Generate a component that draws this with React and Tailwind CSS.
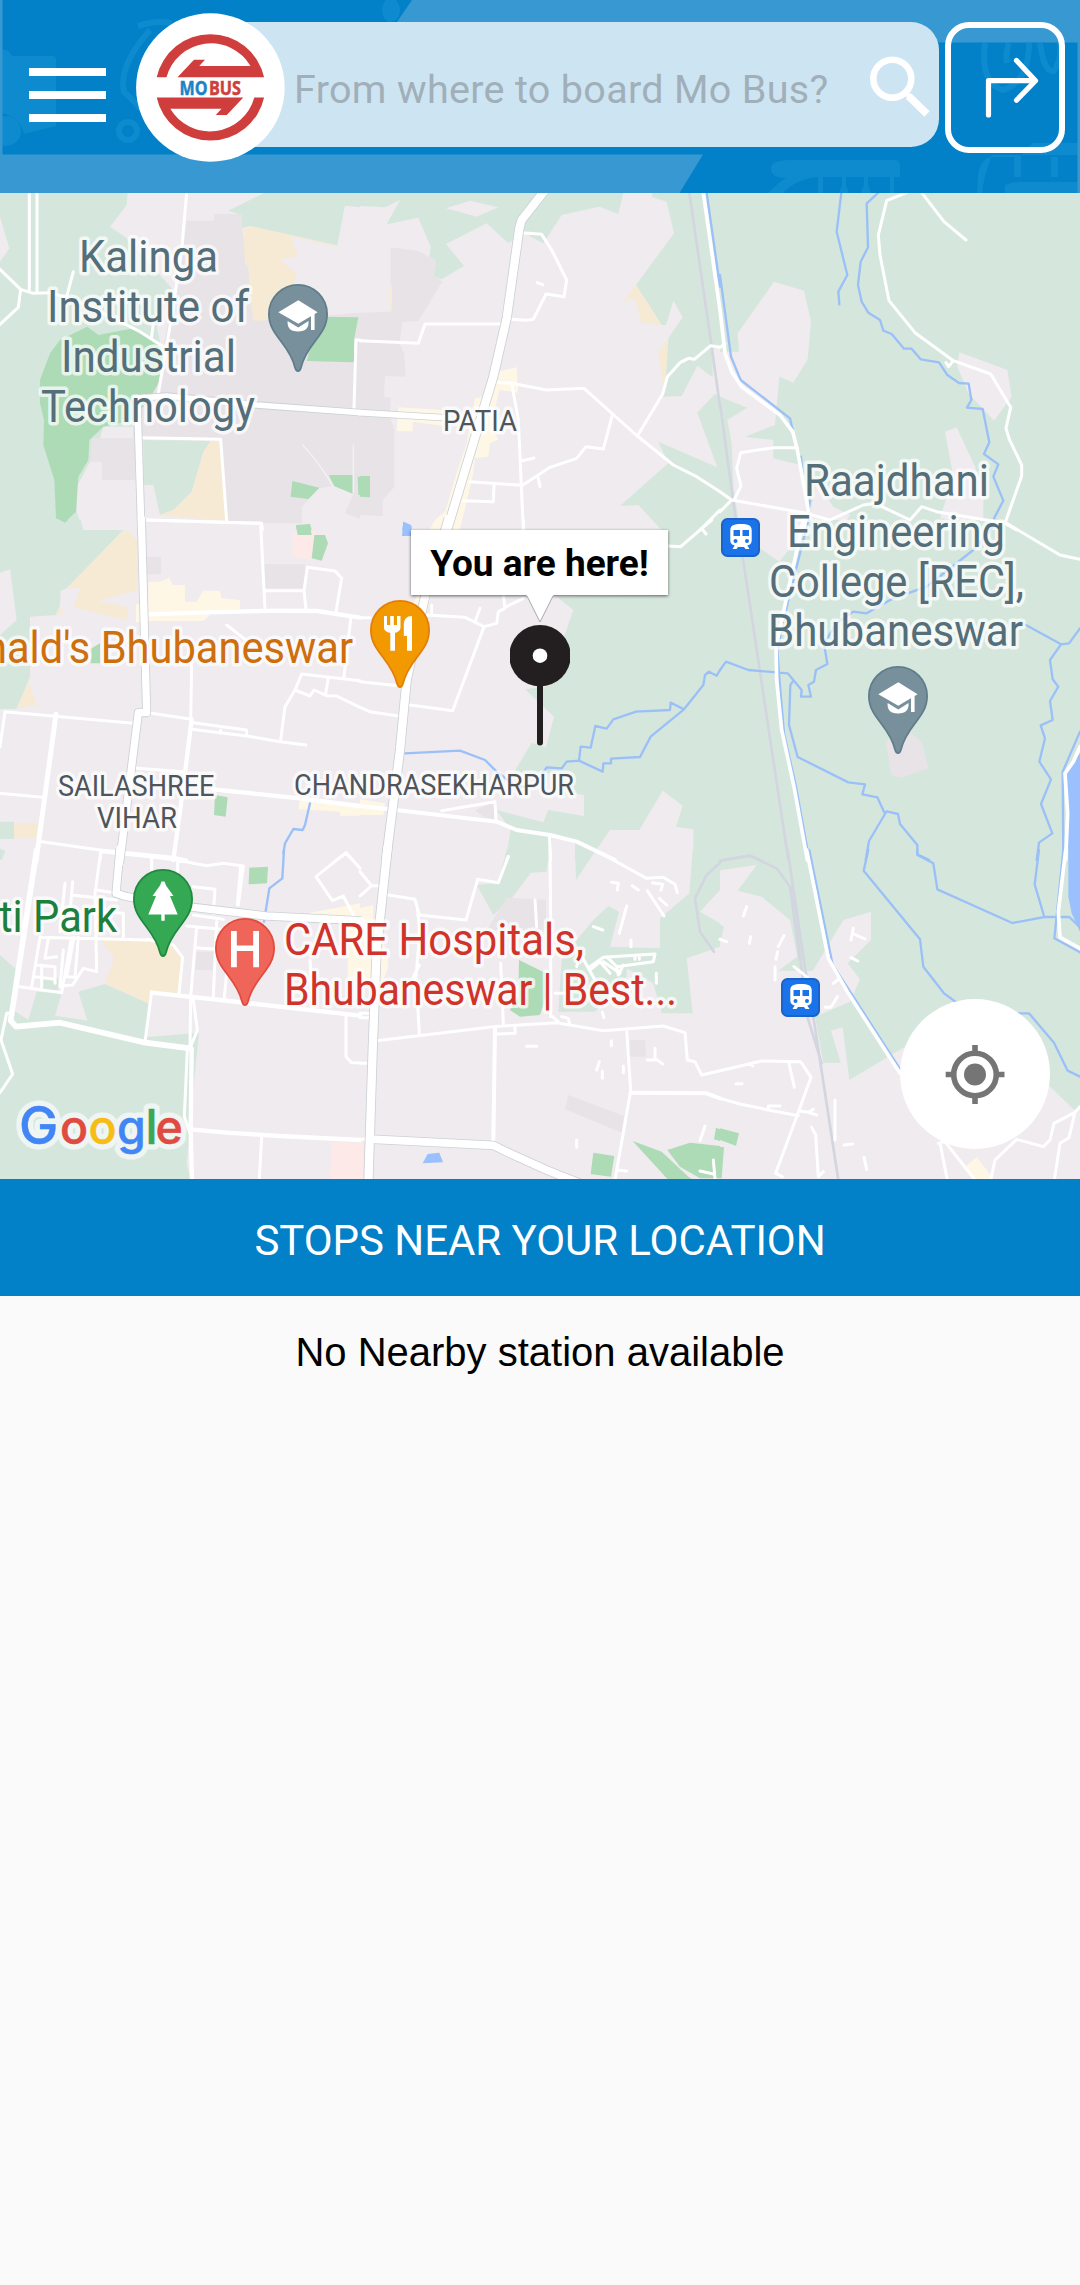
import React from "react";

const LAND = "#efebef";
const GREEN = "#d5e7dd";
const PARK = "#addbb6";
const GRAY = "#e7e3e7";
const SAND = "#f6ead4";
const YELLOW = "#fff7e6";
const WATER = "#9bc0fe";
const PINK = "#fdeae8";

// The map is cut into 3x3 tiles; every tile holds areas [fill, path] and lines by stroke width.
const TILES = [
  {
    x: 0, y: 570,
    areas: [
      [GREEN, "M0 8H383L380 45L330 110L375 140L430 200L520 300L470 410L485 480L475 560L455 615L400 690L410 745L300 745L270 815L230 890V965L250 1020H0Z"],
      [LAND, "M0 80L28 175L0 215Z"],
      [GRAY, "M560 92H642V72H725V110L745 230L758 390H820L1080 368V990L905 1000L680 995L665 745H430L400 640L455 615L490 470L550 170Z"],
      [LAND, "M1002 888L1060 912L1035 970L1080 985V1020H905V950L958 895Z"],
      [GREEN, "M795 8L685 62L725 75V115L750 108L870 135L1012 168L1035 48L1080 52V8Z"],
      [LAND, "M870 135L1012 168L1035 48L1080 52V368H880Z"],
      [SAND, "M730 120L750 108L870 135L1012 166V170L872 140L895 198L838 208L888 250L885 275L820 390L760 392L745 230L735 220Z"],
      [PARK, "M180 450L262 410L295 435L400 415L470 455L490 500L475 580L455 615L400 690L310 710L268 750L265 810L235 860L228 965L195 997L168 985L163 870L130 765L132 690L120 640V570L150 490Z"],
      [PARK, "M960 380L1075 382L1062 450V517L920 513Z"],
      [LAND, "M310 710H400V745H300Z"],
      [GRAY, "M275 745H405V870H305V815H270Z"],
      [LAND, "M305 830L235 890L230 965L250 1020H440L480 975L460 885L410 870H305Z"],
      [GREEN, "M430 750L632 752L610 790L575 905L520 960L480 975L460 885H430Z"],
      [SAND, "M632 752H662L680 993L480 975L520 960L575 905L610 785Z"],
      [PARK, "M877 873L958 893L925 927L872 920ZM987 855H1060V912L1002 888ZM1073 860H1080V915H1075ZM888 1008L930 1003L935 1020H890Z"],
    ],
    roads: [
      [9, "M88 8V300M111 8V308M0 238L62 298L100 310L150 308L210 325L300 365L420 425L490 470M62 298L55 352L0 403M220 245L200 320M560 8L545 180L515 380L475 610M460 400L455 440M1080 450H1068L1062 655M430 743L662 748L680 993M440 990L785 1000L787 1020"],
    ],
    faint: "M908 765Q960 820 1000 890M1060 765V910",
    main: [[20, "M412 640L424 1024"], [17, "M405 625L500 618L770 645L1082 668"]],
  },
  {
    x: 1080, y: 570,
    areas: [
      [GREEN, "M0 8H790L775 72L718 50L605 75L550 160L490 128L445 160L380 100L258 162L312 228L245 268L220 258L228 212L208 200L212 170L175 83L80 103L120 30L75 52L0 48Z"],
      [LAND, "M258 55L330 32L415 52L350 80Z"],
      [GRAY, "M92 172L175 183L228 212L220 255L247 275L175 393L128 395L118 460L132 490L137 560L75 558L72 620L92 625L90 680L103 720V890L68 930V978L0 975V368L92 365Z"],
      [SAND, "M90 285H96V362H90Z"],
      [PARK, "M0 858H30V922L0 920Z"],
      [GREEN, "M878 8L875 20L920 35L942 130L828 285L905 405L918 405L940 332L968 382L925 445L910 600L905 620L965 618L1012 527L1058 562V475H1080V8ZM1012 668L1065 612L1080 620V835L1072 832ZM895 755L1072 832L1080 835V1020H905L835 945L780 948L925 820Z"],
      [SAND, "M828 285L905 405L845 400L825 325L790 335ZM925 445L895 485L910 590L918 560Z"],
      [YELLOW, "M400 548L470 532L475 608L418 600L395 700L415 750L390 758L385 800L345 805L340 850L300 1018H210L225 990L255 965L290 850L320 760L345 625L370 620ZM115 652L250 660V708L158 695V724H110Z"],
      [WATER, "M130 995L155 1008V1020H127Z"],
    ],
    rail: "M988 8L1055 470L1080 650",
    canal: "M1040 8L1080 290",
    roads: [
      [9, "M485 128L545 133L575 180L620 270L612 320L558 312L520 388L500 391L450 388M0 452L175 460L195 402H425M410 577L455 580L560 600L672 595L758 672L832 738L940 825L1010 860L1080 905M455 580L475 690L490 1020M758 672L730 777L678 770L650 805L570 832L520 865L487 886L330 875M487 812L522 804M535 865L540 890M402 885L400 935L310 932M832 738L908 612L922 560L960 518L985 505L1003 508L1052 467L1080 472M1080 960L1020 1020M532 278L548 284"],
      [11, "M1030 8L1080 360"],
    ],
    main: [[17, "M-2 668L250 683"], [25, "M552 4L485 90L478 115L440 385L400 560L260 1024"]],
  },
  {
    x: 2160, y: 570,
    areas: [
      [GREEN, "M0 8H1080V1020H0Z"],
      [LAND, "M53 430L162 275L252 302L273 395L263 508L220 578L178 560L165 705L75 740L160 750V805L240 825L265 990L290 880L340 950L390 975L360 1020H60L40 890L35 760L22 690L82 653L0 620V485H57Z"],
      [LAND, "M718 487L862 540L875 620L822 692L745 610L712 530ZM675 725L710 712L765 830L790 900V1000L660 985L700 860Z"],
    ],
    rail: "M0 640L50 1010",
    canal: "M0 255L33 500L62 570L210 685L218 720M243 800L248 860M270 930L258 1020M364 8L350 125L382 255L355 305L358 343M475 8L440 40L444 172L422 215L414 285L425 335L445 368L480 390L490 422L515 432L552 476H575L602 508L657 517L682 555L717 579L746 581L754 630L741 653L788 657L808 757L792 792L835 823L820 860L850 932L822 985",
    roads: [
      [11, "M0 360L15 490L35 545L65 590L180 675L218 725L232 780L245 850L265 960L250 1020"],
      [9, "M0 472L15 462M560 8L500 32L475 135L480 195L507 332L585 428L700 512L812 552L872 652L858 715L868 748L905 825V858L855 1000L890 1020M605 8L672 95L738 150M700 512L686 530L678 518M232 773H160L62 788L50 835L63 888L42 930M0 905L35 930L250 968L330 990L430 945L465 940L570 990L605 950L650 965L855 1000M35 930L0 965"],
    ],
    main: [],
  },
  {
    x: 0, y: 1560,
    areas: [
      [GREEN, "M0 0H242L250 30H370L200 205L182 212L180 255L168 285L90 290V470L50 567H0V345L50 300L30 148L0 158Z"],
      [GREEN, "M0 905H42V957H0ZM0 985L15 995L5 1020H0Z"],
      [SAND, "M370 32H385L412 65V210L290 243L383 262L380 300L222 262L240 203L200 205ZM168 285L183 260V285ZM85 487L110 555L50 565ZM42 910H118V955H42Z"],
      [YELLOW, "M445 185H480L508 173L518 195H555V245H590L610 212H660L665 235L720 240V268L600 275L630 285L610 303H445V307H408V252H430L445 250ZM900 835L1080 855V887H1020V875L895 868Z"],
      [GRAY, "M440 110H483V163H440ZM792 133H915V205H792ZM760 0H910L900 10H790Z"],
      [PINK, "M878 40L950 30L935 118L878 110Z"],
      [PARK, "M888 15L930 12L935 45H893ZM943 45H975L984 70L965 122L935 115ZM275 385L300 370V430H272ZM645 825L683 832L677 890L642 885ZM180 0H205L195 8Z"],
    ],
    canal: "M930 850L915 915L908 930L880 927L855 970L850 1000",
    roads: [
      [9, "M440 0L782 10L795 268M795 212H912M918 268L912 212L922 142L1005 153L1025 175L1008 275M1053 290L1032 470M680 315L740 362M575 430L572 600M455 580L575 598M580 608L740 630V645M575 628L740 648L840 665L918 675M662 630V640M15 575L400 610M15 575L0 680M410 745L550 755M1080 482L905 462L885 510L855 560L842 660M985 475L977 520M885 510L930 528L942 510L980 527L1010 528L1080 562M0 820L125 832M125 965L300 990L520 1012L560 1020M303 995L300 1020M1010 1020L1038 1000L1058 1020M455 1008V1020"],
      [13, "M445 283L600 278L830 272L950 273L1080 293M575 598L550 800L520 1020M640 808L900 835L1080 858"],
      [15, "M168 583L108 1024"],
    ],
    main: [[22, "M424 -4L440 578H415L360 1020L358 1030"]],
  },
  {
    x: 1080, y: 1560,
    areas: [
      [GREEN, "M885 0H1080V1020H1000V928L948 920L968 857L908 812L838 930H750L688 1020H645V970L575 945L570 1020H437L452 930L410 870L550 907L565 870L672 888V825L640 820L620 760H460L515 668L558 682L582 590L495 508L560 500L640 270L590 230L925 225V30Z"],
      [GRAY, "M345 870L405 845L408 900L370 890Z"],
      [YELLOW, "M250 0H302L285 60L215 220L200 285H150ZM0 838L75 850L70 885H0Z"],
      [WATER, "M130 5L153 15V48H126Z"],
    ],
    canal: "M135 700L300 692L375 720L410 755L470 800L520 800L560 742L605 745L620 725L657 722L662 680L692 683L706 618L740 626L760 598L828 575L930 570L932 548L972 568L1030 495L1035 465L1047 455L1070 467L1080 450M657 722L728 755L730 730H753V716L840 711L872 650L972 568",
    roads: [
      [9, "M490 0V30M0 293H30M200 285L315 292L372 320L410 310L415 275L435 265L430 225M435 262L490 235M345 305L360 265M372 320L278 572L150 555M0 485L115 497M0 562L30 575L115 588M925 78L962 80L1055 0M1025 25L1038 42M245 872L405 845L408 905M568 945L572 1020M445 1010L440 1020M215 255V285"],
      [12, "M0 858L110 870L410 905L470 930L570 945L650 965L765 1020"],
    ],
    main: [[25, "M266 -4L195 230L140 480L120 690L82 990L78 1024"]],
  },
  {
    x: 2160, y: 1560,
    areas: [
      [GREEN, "M0 0H1080V1020H0Z"],
      [LAND, "M120 0H250L230 60L178 125L120 85Z"],
      [GRAY, "M575 640L605 665L625 745L545 773L513 765L498 665L530 640Z"],
      [WATER, "M1080 700L1040 755L1045 1020H1080Z"],
    ],
    rail: "M68 110L205 1020M0 1022L90 1007L120 1020",
    canal: "M265 0L205 240L172 390L180 500L192 640L228 800L268 1020M0 450L18 425L85 450L203 460L245 510L243 530H273L265 495L282 485L288 450L322 432L312 370L350 310L400 275L440 280L520 235L620 200L760 90L820 20M218 485L211 495L207 615L233 711L385 787L435 793L427 823L472 832L495 882L500 874L534 882L540 912L592 975V1003L628 1020M495 882L447 963L437 1020M900 305L1023 373L1047 370L1080 325M1023 373L990 420L998 478L1015 500L990 543L998 600L962 616L975 655L958 725L993 778L963 852L997 940L957 968L950 1020M1080 635L1028 755L1030 1020",
    roads: [
      [11, "M250 0L222 130L168 380L170 480L185 630L222 800L262 1020M1080 680L1060 725L1035 760L1043 880L1037 1020"],
      [9, "M860 10L1020 105L1080 118"],
    ],
    main: [],
  },
  {
    x: 0, y: 2550,
    areas: [
      [GREEN, "M0 315L50 360L40 480L85 510L110 425L185 430L165 497L262 512L235 425L315 402L445 460L435 562L597 548L580 720L560 940L572 990H0ZM0 0H15L0 30ZM125 385H175V420H125Z"],
      [PARK, "M748 53L804 50L801 100L746 103Z"],
      [SAND, "M297 262L440 272L525 285L545 315L535 430L455 425L445 460L315 400L343 325Z"],
      [GRAY, "M590 305H645V360H585Z"],
      [YELLOW, "M930 188L1080 160V210L930 205ZM1043 230H1080V375L1043 395Z"],
      [PINK, "M995 875L1080 880V990H990Z"],
    ],
    canal: "M852 0L847 85L808 115L792 215",
    roads: [
      [9, "M20 490H38M20 490L3 570L38 672L0 728M303 0L285 130L290 365M303 5L450 20L530 30L620 47L670 40L730 48L715 165M722 50L712 165M455 20V60M523 0V25M533 30V65M580 110L645 118L640 190M195 100L180 245M218 95L205 245M222 262L200 380L225 382L235 262M215 135L350 150M290 120L350 130M295 185L370 190M120 262L440 270M60 410L185 428L213 270M120 262L95 410M145 265L135 325L170 320M110 345L165 350V400M105 380L165 388M125 345V410M190 300L180 410M370 195V260M180 408L218 405L250 355L290 365M440 268L520 285L548 322L537 430M590 230L572 440M590 293L650 298M580 195L670 208M560 228L660 238M650 215L640 440M680 370L672 450M455 425L435 575M572 440L570 595M580 450L592 540L570 595M562 600L553 800L570 850M785 860L778 990M1038 495V620L1055 638H1080M1080 55L1038 8L948 80L997 152L1030 138L1062 200M930 330L940 480"],
      [13, "M455 428L660 450L930 480L1080 497M575 595L572 840L576 990M572 838L680 848L840 858L1080 870"],
      [17, "M110 0L32 512L48 530L180 518L430 577L570 595"],
    ],
    main: [[22, "M360 -4L348 130L380 140L580 172L800 198L1084 212"]],
  },
  {
    x: 1080, y: 2550,
    areas: [
      [GREEN, "M440 0H568L560 65L513 68L455 145L400 195L350 105L415 98ZM645 0H708L648 90ZM998 0H1080V120L1020 185L1080 220V290L980 325L998 490H905L880 400L800 355V380L705 485H595L605 330L650 270L700 210L745 168L777 185L750 290L900 295V205L988 130Z"],
      [GRAY, "M440 143L558 150V240H380ZM810 570H855L858 620H808ZM625 735L792 798L785 848L615 778Z"],
      [PARK, "M477 330L555 368L558 440L540 495L480 500L450 480L475 440ZM818 873L905 905L985 980L1000 990H925ZM922 900L990 878L1080 888V985H1020L960 950ZM1068 833L1080 838V873L1062 868ZM700 908L763 918L753 980L692 972Z"],
      [WATER, "M203 912L238 908L249 937L188 940Z"],
      [YELLOW, "M0 175L40 165V210L80 300L85 350L70 390H0Z"],
      [PINK, "M0 875H10V990H0Z"],
    ],
    rail: "M1080 38L1040 75L1005 145L1020 245L1062 305",
    roads: [
      [9, "M570 0L572 200V500M445 20L415 98L353 88L318 210L178 195L165 148L85 135M172 180L180 240L168 380L178 550M178 345L160 380M0 65L35 107L0 138M35 107H60M422 340L430 520M50 572L400 530L590 518L730 542L910 528L975 548L982 630L1005 635L1025 675L1080 662M410 552L465 550V530M800 540L812 722L765 990M500 589H530M0 868H20M0 640H20M0 490H30M0 503H30M525 150L530 230M705 0L860 85L910 82L945 103L952 128M755 97L775 100L772 120M817 107L835 120M877 98L908 103L903 120M862 122L912 198M898 145L920 165M800 168L778 250M700 230L728 240M813 270V290M690 350L730 322L885 312L880 335L770 350L740 320M650 350L660 310L705 390M690 360L720 335L750 370M730 335L780 370M770 350L775 375L790 345M825 315V328M838 315V328M889 370V400M585 430H615M578 500L600 520M605 500L625 505L628 520M727 487L732 503M754 572V587M790 648V668M718 635L710 660M727 663V685M885 595V625L908 642M862 630H885M650 870V892M1035 828L1020 872M770 960L800 963M1060 930L1065 985M1020 963L1060 972"],
      [12, "M405 535L400 870M812 728L1040 730L1080 745"],
    ],
    main: [[23, "M45 868L400 886L460 915L560 960L660 1000"], [25, "M83 -10L50 300L38 600L25 1000"]],
  },
  {
    x: 2160, y: 2550,
    areas: [
      [GREEN, "M0 0H1080V770L1063 780L985 705L860 540L550 593L388 690L368 532L333 542L362 638L310 638L285 500L390 455L420 388L383 340L453 270V185L370 210L325 285L278 363L175 362L232 320L210 210L125 140L53 122L110 45L5 60L0 62ZM0 222L12 230L5 262H0Z"],
      [PARK, "M0 835L57 850L48 887L0 870ZM0 890L12 892L5 985H0Z"],
      [YELLOW, "M770 922L812 975V990H762L738 948Z"],
      [WATER, "M1045 0H1080V245L1055 190L1045 140Z"],
    ],
    rail: "M0 32L90 17L170 55L210 110L240 330M203 0L262 400L283 520L355 990M215 110L262 500L305 640",
    canal: "M268 0L338 345L400 440L545 665M445 0L431 62L600 268L610 350L672 430L720 465L800 490H927L1002 578L1043 662L1080 680M592 0V15L640 40L652 118L877 219L973 201H1048L1080 232M957 0L944 103L973 201M1030 0L1003 265L1080 307",
    roads: [
      [11, "M260 0L325 325L385 430L540 670M1037 0L1015 185L1020 262L1080 295"],
      [9, "M0 662L125 633L242 635L273 682L230 800L167 970L187 980M0 745L60 762L145 780L235 797M145 780V768H180M240 783L265 787L280 778M265 787L290 795M207 640L223 712M275 832L287 855L295 980L310 965M345 750V870M372 885L398 882M432 922L440 958M98 648V638M48 701H66M80 170L70 198M92 260L88 280M192 257L175 290M173 305L168 328M165 350V390M0 268L20 275M222 350L262 382M400 235L393 270M397 250L435 267M393 323L413 333M340 400L355 388M352 440L333 472H315M660 878L682 990M655 880L675 875L765 990M812 990L825 930L890 868L970 890L990 870L1002 820L1065 787L1080 770M1065 787L1047 863L1020 880L1003 990"],
    ],
    main: [],
  },
];

// [text, x, baseline, width, size, colour]
const LABELS = [
  ["Kalinga", 79, 271.7, 139, 44.5, "#546e7a"],
  ["Institute of", 47, 321.7, 202, 44.5, "#546e7a"],
  ["Industrial", 61, 371.7, 175, 44.5, "#546e7a"],
  ["Technology", 41, 421.7, 214, 44.5, "#546e7a"],
  ["PATIA", 443, 431, 74, 29, "#4f555a"],
  ["Raajdhani", 804, 496, 185, 44.5, "#546e7a"],
  ["Engineering", 787, 546.7, 218, 44.5, "#546e7a"],
  ["College [REC],", 769, 596.7, 255, 44.5, "#546e7a"],
  ["Bhubaneswar", 768, 646, 255, 44.5, "#546e7a"],
  ["nald's Bhubaneswar", -16, 663.3, 369, 44.5, "#ce6e0c"],
  ["SAILASHREE", 58, 796, 156.5, 29.5, "#4f555a"],
  ["VIHAR", 97, 827.7, 80, 29.5, "#4f555a"],
  ["CHANDRASEKHARPUR", 294, 795, 280, 29.5, "#4f555a"],
  ["ti Park", -1, 931.7, 118, 44.5, "#1c7f3c"],
  ["CARE Hospitals,", 284, 955, 300, 44.5, "#d1332b"],
  ["Bhubaneswar | Best...", 284, 1005, 393, 44.5, "#d1332b"],
];

// [letter, x, size, colour]
const GOOGLE = [
  ["G", 19, 52.5, "#4285f4"], ["o", 60, 46.5, "#e04a3f"], ["o", 88.500, 46.5, "#f6bd14"],
  ["g", 117, 46.5, "#4285f4"], ["l", 145.500, 47.5, "#3aa757"], ["e", 155.500, 46.5, "#e04a3f"],
];

function MapCanvas() {
  return (
    <svg className="block h-full w-full" viewBox="0 579 3240 2958" preserveAspectRatio="none">
      <rect x="0" y="579" width="3240" height="2958" fill={LAND} />
      {TILES.map((t, i) => (
        <g key={i} transform={`translate(${t.x} ${t.y})`}>
          {t.areas.map(([fill, d], k) => <path key={k} d={d} fill={fill} />)}
        </g>
      ))}
      <g fill="none" strokeLinejoin="round" strokeLinecap="round">
        {TILES.map((t, i) => (
          <g key={i} transform={`translate(${t.x} ${t.y})`}>
            {t.rail && <path d={t.rail} stroke="#d3d5df" strokeWidth="8" />}
            {t.canal && <path d={t.canal} stroke="#9bc0f7" strokeWidth="7" />}
            {t.faint && <path d={t.faint} stroke="#f2f0f2" strokeWidth="5" />}
          </g>
        ))}
        {TILES.map((t, i) => (
          <g key={i} transform={`translate(${t.x} ${t.y})`} stroke="#fff">
            {t.roads.map(([w, d], k) => <path key={k} d={d} strokeWidth={w} />)}
          </g>
        ))}
        {TILES.map((t, i) => (
          <g key={i} transform={`translate(${t.x} ${t.y})`} stroke="#cbd1d6" strokeLinecap="butt">
            {t.main.map(([w, d], k) => <path key={k} d={d} strokeWidth={w + 5} />)}
          </g>
        ))}
        {TILES.map((t, i) => (
          <g key={i} transform={`translate(${t.x} ${t.y})`} stroke="#fff">
            {t.main.map(([w, d], k) => <path key={k} d={d} strokeWidth={w} />)}
          </g>
        ))}
      </g>
      <g transform="scale(3)" fontFamily="Roboto, sans-serif" strokeLinejoin="round">
        {LABELS.map(([text, x, y, w, size, fill]) => (
          <text key={text + y} x={x} y={y} fontSize={size} textLength={w} lengthAdjust="spacingAndGlyphs"
            fill={fill} stroke="#ffffff" strokeOpacity="0.72" strokeWidth="7" style={{ paintOrder: "stroke" }}>{text}</text>
        ))}
        <g fontFamily="Inter, sans-serif" fontWeight="500">
          <text y="1143.500" stroke="#eef5f2" strokeWidth="11" fill="none" aria-hidden="true">
            {GOOGLE.map(([c, x, s], i) => <tspan key={i} x={x} fontSize={s}>{c}</tspan>)}
          </text>
          <text y="1143.500">
            {GOOGLE.map(([c, x, s, f], i) => <tspan key={i} x={x} fontSize={s} fill={f} stroke={f} strokeWidth="0.500">{c}</tspan>)}
          </text>
        </g>
      </g>
    </svg>
  );
}

function Pin({ className, fill, edge, children }) {
  return (
    <svg className={`absolute h-[88px] w-[60px] ${className}`} viewBox="0 0 60 88">
      <path d="M30 .9C13.900.9.9 13.900.9 30c0 11.500 5.600 19 12.600 28C20 66.500 25 75 27 83.500c.8 3 1.500 3.600 3 3.600s2.200-.6 3-3.600c2-8.500 7-17 13.500-25.500C53.500 49 59.100 41.500 59.100 30 59.100 13.900 46.100.9 30 .9z"
        fill={fill} stroke={edge} strokeWidth="1.8" />
      {children}
    </svg>
  );
}

function Cap() {
  return (
    <g fill="#fff">
      <path d="M10.300 28.300L30.300 16.300 49.600 28.300 30.300 39.700Z" />
      <path d="M43 30.500L46.600 28.500V46H43ZM19.600 37L30.300 43.500 40.500 37C41 44 38 47.400 30 47.400S19.200 44 19.600 37Z" />
    </g>
  );
}

function Station({ className }) {
  return (
    <svg className={`absolute h-[39px] w-[39px] ${className}`} viewBox="0 0 39 39">
      <rect x="1" y="1" width="37" height="37" rx="5.500" fill="#1a73e8" stroke="#1a62cc" strokeWidth="2" />
      <path fill="#fff" fillRule="evenodd" d="M20 6c7 0 10.700 1.500 10.700 6v10.500c0 3-2 4.900-4.400 4.900L28.500 31h-4l-1.500-2h-6l-1.500 2h-4l2.200-3.600c-2.400 0-4.400-1.900-4.400-4.900V12C9.300 7.500 13 6 20 6zM12.500 12v6h6.500v-6zM21.500 12v6H28v-6zM14.500 21a2 2 0 100 4 2 2 0 000-4zM26 21a2 2 0 100 4 2 2 0 000-4z" />
    </svg>
  );
}

function HeaderArt() {
  return (
    <svg className="absolute inset-0 h-full w-full" viewBox="0 0 1080 193">
      <g fill="#0e8bcf">
        <path d="M0 50q8-2 12 6H52q4 0 4 4V126L24 134q-4-18-24-21z" />
        <circle cx="6" cy="131" r="15" />
        <ellipse cx="391" cy="10" rx="9" ry="12" />
        <path d="M771 168q0-8 20-8h105q4 0 4 6v11h-6v16h-4V177H868v8l3 8h-10l3-8v-8H846v8l3 8h-10l3-8v-8H823v16h-5V177q-22 2-35 16H768q12-12 18-15-16 0-15-10z" />
        <path d="M978 175q2-15 12-18h30l12-14h48v12h-88q-8 20-10 38h-5zM1014 157h7v20h-7zM1051 157h7v20h-7zM1005 185q8-4 20-3h55v11h-75z" />
      </g>
      <g fill="none" stroke="#0e8bcf" strokeWidth="6">
        <circle cx="128" cy="131" r="9" />
        <path d="M138 26q18-6 34-3M150 30Q118 66 124 92q14 12 24 26M985 43q-5 40 18 47 26-8 26-47M1009 43q-4 10-2 20M1040 43q4 30 14 28 8-12 6-28" />
      </g>
      <g fill="#3798d2">
        <path d="M412 0H1080V42.500H383ZM0 154.500H703L679.500 193H0ZM0 0H2.500V193H0ZM1077.500 0H1080V193H1077.500Z" />
      </g>
    </svg>
  );
}

function Logo() {
  const half = "M156.700 77.300A55 55 0 01264.100 77.300H177.500L194 59.700H205L199.300 66H250.500A46 46 0 00166.500 77.300Z";
  return (
    <svg className="h-[149px] w-[149px]" viewBox="136 13 149 149">
      <circle cx="210.400" cy="87.500" r="74.300" fill="#fff" />
      <g fill="#cf3e3c">
        <path d={half} />
        <path d={half} transform="rotate(180 210.400 87.400)" />
      </g>
      <g fontFamily="Open Sans, sans-serif" fontWeight="700" fontSize="19">
        <text x="179.500" y="94.600" textLength="28" lengthAdjust="spacingAndGlyphs" fill="#1b84c6" stroke="#1b84c6" strokeWidth="0.500">MO</text>
        <text x="209" y="94.600" textLength="32" lengthAdjust="spacingAndGlyphs" fill="#cf3e3c" stroke="#cf3e3c" strokeWidth="0.500">BUS</text>
      </g>
    </svg>
  );
}

export default function App() {
  return (
    <div className="flex h-[2285px] w-[1080px] flex-col overflow-hidden bg-[#fafafa] font-['Roboto',sans-serif]">
      <header className="relative h-[193px] shrink-0 overflow-hidden bg-[#0280c8]">
        <HeaderArt />
        <div className="relative flex items-start">
          <button className="ml-[29px] mt-[68px] flex w-[77px] flex-col gap-[15px]" aria-label="Menu">
            <span className="h-2 w-full bg-white" />
            <span className="h-2 w-full bg-white" />
            <span className="h-2 w-full bg-white" />
          </button>
          <div className="relative z-10 ml-[30px] mt-[13px] h-[149px] w-[149px] shrink-0">
            <Logo />
          </div>
          <div className="-ml-[75px] mt-[22px] flex h-[125px] w-[729px] items-center rounded-r-[28px] bg-[#cde5f2] pl-[84px]">
            <span className="w-[560px] whitespace-nowrap pt-[11px] text-[39.500px] leading-[46px] tracking-[0.320px] text-[#a1afb9]">From where to board Mo Bus?</span>
            <svg className="ml-[12px] mt-[3px] h-[66px] w-[66px] shrink-0" viewBox="866 54 66 66" fill="none" stroke="#fff">
              <circle cx="892.300" cy="79.700" r="19" strokeWidth="6.600" />
              <path d="M908.500 97L927 115" strokeWidth="7.500" />
              <path d="M905 93L911 99" strokeWidth="5" />
            </svg>
          </div>
          <button className="ml-[6px] mt-[22px] h-[131px] w-[120px] rounded-[24px] border-[6px] border-white" aria-label="Directions">
            <svg className="h-full w-full" viewBox="951 28 108 119" fill="none" stroke="#fff" strokeWidth="5.200" strokeLinecap="round" strokeLinejoin="round">
              <path d="M988.500 115V80.700H1035M1016.500 60.500L1035.500 80.700 1016.500 100.200" />
            </svg>
          </button>
        </div>
      </header>

      <section className="relative h-[986px] shrink-0 overflow-hidden">
        <MapCanvas />
        <Pin className="left-[268px] top-[91px]" fill="#78909c" edge="#5f7d8a"><Cap /></Pin>
        <Pin className="left-[868px] top-[473px]" fill="#78909c" edge="#5f7d8a"><Cap /></Pin>
        <Pin className="left-[370px] top-[407px]" fill="#f29900" edge="#e37f08">
          <g fill="#fff">
            <path d="M14 16h3v9h3.200v-9h3.600v9H27v-9h3.500v11.500c0 3-2.500 4.500-5.500 5.500v17.700h-4.700V33c-4-1-6.300-2.500-6.300-5.500zM42 16v34.700h-5V36h-3.200V25c0-6 3.200-9 8.200-9z" />
          </g>
        </Pin>
        <Pin className="left-[133px] top-[676px]" fill="#34a853" edge="#1f8a3f">
          <path fill="#fff" d="M28.500 12.500h3l1.500 4 7.500 10.500h-3.500L44.700 45.500h-13v6.200h-3.400v-6.200h-13L23 27h-3.500L27 16.500z" />
        </Pin>
        <Pin className="left-[215px] top-[725px]" fill="#f0655a" edge="#e34a3e">
          <path fill="#fff" d="M16 13h5.800v14.600h16.400V13H44v36.300h-5.800V33H21.800v16.300H16z" />
        </Pin>
        <Station className="left-[721px] top-[325px]" />
        <Station className="left-[781px] top-[785px]" />

        <svg className="absolute left-[510px] top-[432px] h-[122px] w-[60px]" viewBox="0 0 60 122">
          <path d="M30 58V117.500" stroke="#231f20" strokeWidth="6" strokeLinecap="round" />
          <circle cx="30" cy="30.700" r="30.700" fill="#231f20" />
          <circle cx="30" cy="30.700" r="7.300" fill="#fff" />
        </svg>
        <div className="absolute left-[411px] top-[337px] flex h-[65px] w-[257px] items-center justify-center bg-white shadow-[0_1px_3px_rgba(0,0,0,0.6)]">
          <span className="whitespace-nowrap pt-[3px] text-[37px] font-bold leading-[44px] text-black">You are here!</span>
          <svg className="absolute left-[115px] top-[64px] h-[29px] w-[28px]" viewBox="0 0 28 29">
            <path d="M0 0L14 28 28 0" fill="#fff" stroke="#a9a9a9" strokeWidth="1" />
            <path d="M0 0H28L27.500 1.500H.5Z" fill="#fff" />
          </svg>
        </div>
        <button className="absolute left-[900px] top-[806px] h-[150px] w-[150px] rounded-full bg-white" aria-label="My location">
          <svg className="h-full w-full" viewBox="0 0 150 150" fill="none" stroke="#757575" strokeWidth="5.600">
            <circle cx="75" cy="75.500" r="21.300" />
            <circle cx="75" cy="75.500" r="11" fill="#757575" stroke="none" />
            <path d="M75 46V55M75 96V105M45.700 75.500H54M96 75.500H104.500" />
          </svg>
        </button>
      </section>

      <div className="flex h-[117px] shrink-0 items-center justify-center bg-[#0280c8]">
        <h2 className="whitespace-nowrap pt-[6px] text-[42px] leading-[50px] tracking-[-0.050px] text-white">STOPS NEAR YOUR LOCATION</h2>
      </div>
      <p className="mt-[33px] whitespace-nowrap text-center font-['Liberation_Sans',sans-serif] text-[40px] leading-[46px] text-black">No Nearby station available</p>
    </div>
  );
}
